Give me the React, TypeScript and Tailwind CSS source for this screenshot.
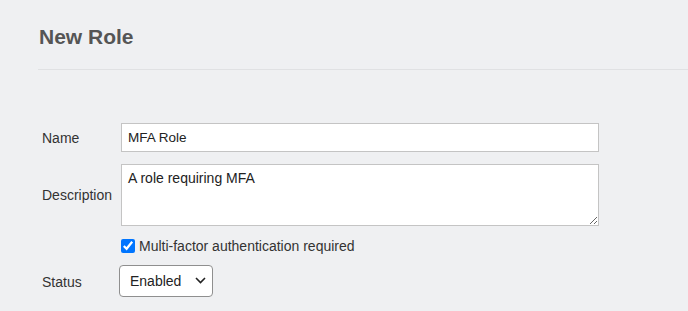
import React, { useState } from 'react';

export default function App() {
  const [name, setName] = useState('MFA Role');
  const [description, setDescription] = useState('A role requiring MFA');
  const [mfa, setMfa] = useState(true);
  const [status, setStatus] = useState('enabled');

  return (
    <div className="min-h-[311px] w-full bg-[#eff0f2] pl-[38px] font-['Liberation_Sans',Arial,sans-serif] text-[14px] text-[#333]">
      <h1 className="pt-[24px] pl-[1px] text-[21px] font-bold leading-[25px] text-[#555]">New Role</h1>
      <div className="mt-[20px] h-px bg-[#e0e1e3]" />

      <form className="mt-[53px] grid grid-cols-[79px_478px] items-center gap-y-[12px] pl-[4px]">
        <label className="leading-[16px]">Name</label>
        <input
          type="text"
          value={name}
          onChange={e => setName(e.target.value)}
          className="h-[29px] border border-[#c4c4c4] bg-white px-[6px] text-[13.5px] text-[#222] outline-none"
        />

        <label className="leading-[16px]">Description</label>
        <textarea
          value={description}
          onChange={e => setDescription(e.target.value)}
          className="h-[62px] resize border border-[#c4c4c4] bg-white px-[6px] py-[4px] text-[14px] leading-[18px] text-[#222] outline-none"
        />

        <div />
        <label className="flex items-center gap-[4px] leading-[16px]">
          <input
            type="checkbox"
            checked={mfa}
            onChange={e => setMfa(e.target.checked)}
            className="m-0 h-[14px] w-[14px] accent-[#0075ff]"
          />
          <span>Multi-factor authentication required</span>
        </label>

        <label className="leading-[16px]">Status</label>
        <div className="relative -ml-[2px] -mt-[1px] w-[94px]">
          <select
            value={status}
            onChange={e => setStatus(e.target.value)}
            className="h-[32px] w-full appearance-none rounded-[4px] border border-[#8f8f8f] bg-white pl-[10px] text-[14px] text-[#222] outline-none"
          >
            <option value="enabled">Enabled</option>
            <option value="disabled">Disabled</option>
          </select>
          <svg
            className="pointer-events-none absolute right-[7px] top-[12px]"
            width="11"
            height="7"
            viewBox="0 0 11 7"
            fill="none"
          >
            <path d="M1 1l4.5 4.5L10 1" stroke="#222" strokeWidth="1.6" />
          </svg>
        </div>
      </form>
    </div>
  );
}
